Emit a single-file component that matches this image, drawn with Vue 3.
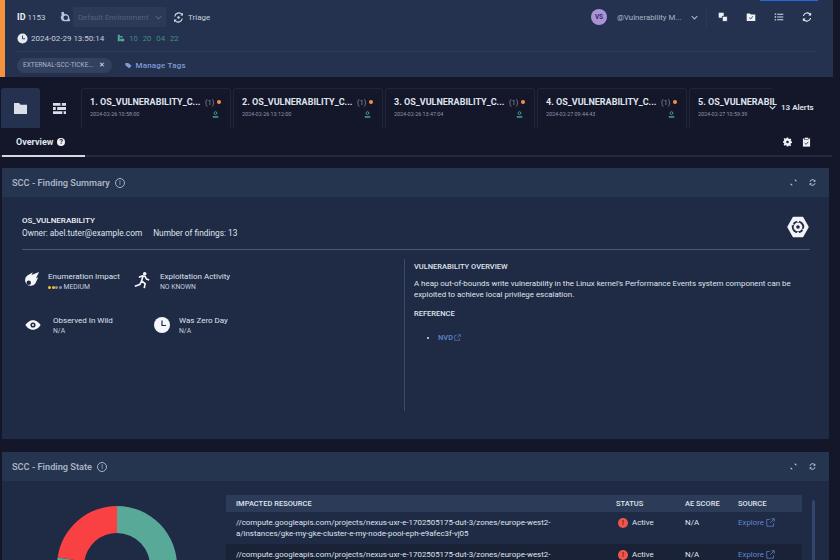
<template>
  <div class="page">
    <header class="top">
      <div class="accent"></div>
      <div class="top-main">
        <div class="blue-tab"></div>
        <div class="top-row">
          <div class="meta-left">
            <span class="id"><b>ID</b> 1153</span>
            <svg class="env-ico" viewBox="0 0 16 16"><path fill="#b9c4d6" d="M3 1.500 6 1l1.500 3.200A5 5 0 0 1 13.600 9l1.400 4.200-2.600.6H7a5 5 0 0 1-3.400-8.300z"/><circle cx="9" cy="9" r="3" fill="#25324f"/></svg>
            <div class="env-select">Default Environment
              <svg viewBox="0 0 10 6" class="chev"><path d="M1 1l4 4 4-4" fill="none" stroke="#53617c" stroke-width="1.500"/></svg>
            </div>
            <svg class="triage-ico" viewBox="0 0 16 16"><path d="M13 3.500A6 6 0 0 0 2.500 6.500M3 12.500A6 6 0 0 0 13.500 9.500" fill="none" stroke="#d5dbe6" stroke-width="1.600"/><path d="M14.500 1v4h-4zM1.500 15v-4h4z" fill="#d5dbe6"/><circle cx="8" cy="8" r="1.800" fill="#d5dbe6"/></svg>
            <span class="triage">Triage</span>
          </div>
          <div class="meta-right">
            <span class="avatar">VS</span>
            <span class="user">@Vulnerability M...</span>
            <svg viewBox="0 0 10 6" class="chev user-chev"><path d="M1 1l4 4 4-4" fill="none" stroke="#aab4c6" stroke-width="1.500"/></svg>
            <span class="vsep"></span>
            <div class="actions">
              <svg viewBox="0 0 14 14"><rect x="1" y="1" width="7" height="7" fill="#eef1f6"/><rect x="6" y="6" width="7" height="7" fill="#eef1f6" stroke="#25324f"/></svg>
              <svg viewBox="0 0 14 14"><path d="M1 2h4.500l1.500 1.500h6V12.500H1z" fill="#eef1f6"/><path d="M4.500 8l2 1.800L9.500 6" fill="none" stroke="#25324f" stroke-width="1.200"/></svg>
              <svg viewBox="0 0 14 14"><path d="M1 2h2v2H1zM1 6h2v2H1zM1 10h2v2H1zM4.500 2.300H13v1.400H4.500zM4.500 6.300H13v1.400H4.500zM4.500 10.300H13v1.400H4.500z" fill="#d5dbe6"/></svg>
              <svg viewBox="0 0 14 14"><path d="M11.500 3.500A5.300 5.300 0 0 0 2 5.500M2.500 10.500A5.300 5.300 0 0 0 12 8.500" fill="none" stroke="#eef1f6" stroke-width="1.600"/><path d="M12.800 .8v4h-4zM1.200 13.200v-4h4z" fill="#eef1f6"/></svg>
            </div>
          </div>
        </div>
        <div class="time-row">
          <svg class="clock" viewBox="0 0 12 12"><circle cx="6" cy="6" r="5.500" fill="#e6eaf1"/><path d="M6 2.800V6.300H8.800" fill="none" stroke="#25324f" stroke-width="1"/></svg>
          <span class="stamp">2024-02-29 13:50:14</span>
          <svg class="sla" viewBox="0 0 10 10"><path d="M1 1h2.500v8H1zM4 6h5v3H4zM4 2.500h3v2H4z" fill="#4fae95"/></svg>
          <span class="countdown">10<i>:</i>20<i>:</i>04<i>:</i>22</span>
        </div>
        <div class="divider"></div>
        <div class="tag-row">
          <span class="tag">EXTERNAL-SCC-TICKE... <em>✕</em></span>
          <span class="manage">
            <svg viewBox="0 0 10 10"><path d="M.5 1.500h4l5 4-3.500 3.500-5.500-4.500z" fill="#7f9bd8"/></svg>
            Manage Tags
          </span>
        </div>
      </div>
    </header>

    <nav class="tabs">
      <div class="icon-tab active">
        <svg viewBox="0 0 16 14"><path d="M1 1h5.500l1.500 2H15v10H1z" fill="#d9dfe9"/></svg>
      </div>
      <div class="icon-tab">
        <svg viewBox="0 0 16 14"><path d="M1 1h14v3H1zM1 5.500h14v3H1zM1 10h14v3H1z" fill="#d9dfe9"/><path d="M9 1h1.500v3H9zM4 5.500h1.500v3H4zM11 10h1.500v3H11z" fill="#14162a"/></svg>
      </div>
      <div class="alert-tab" v-for="t in alertTabs" :key="t.n">
        <div class="alert-title">
          <span class="alert-name">{{ t.n }}. OS_VULNERABILITY_C...</span>
          <span class="alert-count">(1)</span>
          <span class="dot"></span>
        </div>
        <div class="alert-sub">
          <span class="alert-date">{{ t.date }}</span>
          <svg viewBox="0 0 10 10" class="person"><circle cx="5" cy="3" r="2" fill="none" stroke="#4fae95" stroke-width="1.200"/><path d="M1 9.500V7.500h8v2z" fill="#4fae95"/></svg>
        </div>
      </div>
      <div class="alert-tab last">
        <div class="alert-title"><span class="alert-name clip">5. OS_VULNERABIL</span></div>
        <div class="alert-sub"><span class="alert-date">2024-02-27 10:59:39</span></div>
      </div>
      <div class="alerts-total">
        <svg viewBox="0 0 10 6" class="chev"><path d="M1 1l4 4 4-4" fill="none" stroke="#d5dbe6" stroke-width="1.500"/></svg>
        13 Alerts
      </div>
    </nav>

    <div class="subnav">
      <div class="overview">Overview <span class="help">?</span></div>
      <div class="subnav-icons">
        <svg viewBox="0 0 12 12"><path fill="#eef1f6" d="M5 0h2l.3 1.600 1.200.5 1.400-.9 1.300 1.400-.9 1.300.5 1.200 1.200.3v2l-1.500.3-.5 1.200.9 1.400-1.300 1.300-1.400-.9-1.200.5L7 12H5l-.3-1.400-1.200-.5-1.400.9L.8 9.700l.9-1.400-.5-1.200L0 6.900v-2l1.200-.3.5-1.200-.9-1.300 1.300-1.400 1.400.9 1.200-.5z"/><circle cx="6" cy="6" r="1.700" fill="#14162a"/></svg>
        <svg viewBox="0 0 12 14"><path d="M1 2h10v11.500H1z" fill="#eef1f6"/><rect x="3.500" y=".5" width="5" height="3" fill="#eef1f6" stroke="#14162a" stroke-width=".7"/><path d="M3.500 8.500l2 1.800 3-3.500" fill="none" stroke="#14162a" stroke-width="1.100"/></svg>
      </div>
    </div>

    <section class="panel summary">
      <div class="panel-head">
        <span class="panel-title">SCC - Finding Summary</span>
        <span class="info">i</span>
        <div class="panel-tools">
          <svg viewBox="0 0 10 10"><path d="M6 1h3v3zM1 9V6l3 3z" fill="#d5dbe6"/></svg>
          <svg viewBox="0 0 10 10"><path d="M8 2.500A3.600 3.600 0 0 0 1.500 4M2 7.500A3.600 3.600 0 0 0 8.500 6" fill="none" stroke="#d5dbe6" stroke-width="1.200"/><path d="M9 .8v3H6zM1 9.200v-3h3z" fill="#d5dbe6"/></svg>
        </div>
      </div>
      <div class="summary-body">
        <div class="finding-head">
          <div>
            <div class="finding-name">OS_VULNERABILITY</div>
            <div class="finding-owner">
              <span>Owner: abel.tuter@example.com</span>
              <span>Number of findings: 13</span>
            </div>
          </div>
          <svg class="hex" viewBox="0 0 24 24">
            <path d="M7 1.500h10L23 12l-6 10.500H7L1 12z" fill="#f2f4f8" stroke="#f2f4f8" stroke-linejoin="round" stroke-width="1.500"/>
            <circle cx="12" cy="12" r="5.800" fill="none" stroke="#1f2a44" stroke-width="2"/>
            <circle cx="12" cy="12" r="2" fill="#1f2a44"/>
            <path d="M12 2.500v4M12 17.500v4M3.500 7.500l3.500 2M17 14.500l3.500 2" stroke="#f2f4f8" stroke-width="2"/>
          </svg>
        </div>
        <div class="hr"></div>
        <div class="columns">
          <div class="stats">
            <div class="stat">
              <svg class="comet" viewBox="0 0 20 20"><path d="M19 1l-3.500 7L18 7l-3 6.500a6.300 6.300 0 1 1-9-8.500L12 1.500l-1.500 3z" fill="#f4f6fa"/><circle cx="7.500" cy="13" r="2.500" fill="#1f2a44"/></svg>
              <div>
                <div class="stat-name">Enumeration Impact</div>
                <div class="stat-val"><span class="pips"><i class="on"></i><i class="on"></i><i></i><i></i></span>MEDIUM</div>
              </div>
            </div>
            <div class="stat">
              <svg class="runner" viewBox="0 0 20 20"><circle cx="13" cy="3" r="2" fill="#f4f6fa"/><path d="M6.500 7l4-1.500 3 .5 1.500 3 3 1M11 6l-1.500 5 4 3-1 5M9.500 11.500 7.500 15 2 17" fill="none" stroke="#f4f6fa" stroke-width="1.800"/></svg>
              <div>
                <div class="stat-name">Exploitation Activity</div>
                <div class="stat-val">NO KNOWN</div>
              </div>
            </div>
            <div class="stat">
              <svg class="eye" viewBox="0 0 20 14"><path d="M10 1c4.500 0 8 3.500 9.500 6-1.500 2.500-5 6-9.500 6S2 9.500.5 7C2 4.500 5.500 1 10 1z" fill="#f4f6fa"/><circle cx="10" cy="7" r="3.200" fill="#1f2a44"/><circle cx="10" cy="7" r="1.300" fill="#f4f6fa"/></svg>
              <div>
                <div class="stat-name">Observed In Wild</div>
                <div class="stat-val">N/A</div>
              </div>
            </div>
            <div class="stat">
              <svg class="clock-big" viewBox="0 0 16 16"><circle cx="8" cy="8" r="8" fill="#f4f6fa"/><path d="M8 3.500V8.500H12" fill="none" stroke="#1f2a44" stroke-width="1.200"/></svg>
              <div>
                <div class="stat-name">Was Zero Day</div>
                <div class="stat-val">N/A</div>
              </div>
            </div>
          </div>
          <div class="overview-col">
            <div class="col-head">VULNERABILITY OVERVIEW</div>
            <p class="col-text">A heap out-of-bounds write vulnerability in the Linux kernel's Performance Events system component can be exploited to achieve local privilege escalation.</p>
            <div class="col-head ref">REFERENCE</div>
            <ul class="refs">
              <li>NVD<svg viewBox="0 0 10 10"><path d="M8 6v3H1V2h3M5.500 1H9v3.500M9 1 4.500 5.500" fill="none" stroke="#5f86cf" stroke-width=".9"/></svg></li>
            </ul>
          </div>
        </div>
      </div>
    </section>

    <section class="panel state">
      <div class="panel-head">
        <span class="panel-title">SCC - Finding State</span>
        <span class="info">i</span>
        <div class="panel-tools">
          <svg viewBox="0 0 10 10"><path d="M6 1h3v3zM1 9V6l3 3z" fill="#d5dbe6"/></svg>
          <svg viewBox="0 0 10 10"><path d="M8 2.500A3.600 3.600 0 0 0 1.500 4M2 7.500A3.600 3.600 0 0 0 8.500 6" fill="none" stroke="#d5dbe6" stroke-width="1.200"/><path d="M9 .8v3H6zM1 9.200v-3h3z" fill="#d5dbe6"/></svg>
        </div>
      </div>
      <div class="state-body">
        <div class="donut-wrap">
          <svg class="donut" viewBox="0 0 120 120">
            <path d="M60 0a60 60 0 1 1-59.400 51.600L27.300 55.400A33 33 0 1 0 60 27z" fill="#58a997"/>
            <path d="M60 0v27a33 33 0 0 0-32.700 28.400L.6 51.600A60 60 0 0 1 60 0z" fill="#f94144"/>
          </svg>
        </div>
        <div class="table-wrap">
          <div class="t-row t-head">
            <span class="c-res">IMPACTED RESOURCE</span>
            <span class="c-status">STATUS</span>
            <span class="c-score">AE SCORE</span>
            <span class="c-src">SOURCE</span>
          </div>
          <div class="t-row" v-for="(r, i) in rows" :key="i" :class="{ alt: i % 2 }">
            <span class="c-res">{{ r }}</span>
            <span class="c-status"><b class="bang">!</b>Active</span>
            <span class="c-score">N/A</span>
            <span class="c-src link">Explore<svg viewBox="0 0 12 12"><path d="M10 7v4H1V2h4M7 1h4v4M11 1 5.500 6.500" fill="none" stroke="#5f86cf" stroke-width="1"/></svg></span>
          </div>
        </div>
        <div class="scrollbar"></div>
      </div>
    </section>
  </div>
</template>

<script setup>
const alertTabs = [
  { n: 1, date: '2024-02-26 10:58:00' },
  { n: 2, date: '2024-02-26 13:12:00' },
  { n: 3, date: '2024-02-26 13:47:04' },
  { n: 4, date: '2024-02-27 09:44:43' }
];

const path = '//compute.googleapis.com/projects/nexus-uxr-e-1702505175-dut-3/zones/europe-west2-a/instances/gke-my-gke-cluster-e-my-node-pool-eph-e9afec3f-vj05';
const rows = [path, path];
</script>

<style>
html, body {
  margin: 0;
  background: #14162a;
  overflow: hidden;
}
</style>

<style scoped>
.page {
  width: 840px;
  height: 560px;
  overflow: hidden;
  background: #14162a;
  font-family: Roboto, "Noto Sans", sans-serif;
  color: #e6eaf1;
  font-size: 8px;
}
svg { display: block; flex: none; }

.top {
  display: flex;
  width: 833px;
  height: 77px;
  background: #25324f;
}
.accent { width: 5px; background: #f5923e; }
.top-main { flex: 1; position: relative; padding: 0 16px 0 12px; min-width: 0; }
.blue-tab {
  position: absolute;
  top: -1px;
  right: 15px;
  width: 58px;
  height: 2px;
  background: #2469e0;
}
.top-row {
  display: flex;
  justify-content: space-between;
  align-items: center;
  height: 24px;
  padding-top: 5px;
}
.meta-left, .meta-right { display: flex; align-items: center; }
.id { font-size: 8px; color: #c8cfdc; width: 42px; }
.id b { color: #eef1f6; font-size: 9px; }
.env-ico { width: 12px; height: 12px; margin-right: 2px; }
.env-select {
  display: flex;
  align-items: center;
  justify-content: space-between;
  width: 93px;
  height: 20px;
  padding: 0 4px 0 5px;
  box-sizing: border-box;
  background: #2c3a58;
  color: #53617c;
  font-size: 7.800px;
  white-space: nowrap;
}
.chev { width: 7px; height: 5px; }
.triage-ico { width: 11px; height: 11px; margin: 0 4px 0 7px; }
.triage { color: #c8cfdc; font-size: 8px; }
.avatar {
  width: 16px;
  height: 16px;
  border-radius: 50%;
  background: #a992d6;
  color: #33305a;
  font-size: 6.500px;
  font-weight: 700;
  display: flex;
  align-items: center;
  justify-content: center;
  margin-right: 10px;
}
.user { color: #aab4c6; font-size: 7.800px; width: 70px; white-space: nowrap; }
.user-chev { margin: 0 8px 0 4px; }
.vsep { width: 1px; height: 22px; background: #2c3a58; margin-right: 11px; }
.actions { display: flex; gap: 18px; align-items: center; margin-right: 5px; }
.actions svg { width: 10px; height: 10px; }

.time-row { display: flex; align-items: center; height: 18px; }
.clock { width: 11px; height: 11px; margin-right: 3px; }
.stamp { font-size: 8px; color: #c8cfdc; width: 86px; }
.sla { width: 8px; height: 8px; margin-right: 4px; }
.countdown { color: #3d8f7f; font-size: 7.800px; }
.countdown i { font-style: normal; margin: 0 1.500px; color: #3b4a68; }
.divider { height: 1px; background: #2f3e5c; margin: 4px 0 0; }
.tag-row { display: flex; align-items: center; height: 26px; }
.tag {
  display: flex;
  align-items: center;
  gap: 5px;
  height: 15px;
  padding: 0 7px 0 6px;
  border-radius: 8px;
  background: #32415f;
  color: #aab4c6;
  font-size: 6.500px;
  white-space: nowrap;
}
.tag em { font-style: normal; color: #dfe4ec; font-size: 7px; }
.manage {
  display: flex;
  align-items: center;
  gap: 4px;
  margin-left: 13px;
  color: #7f9bd8;
  font-size: 8px;
  font-weight: 500;
  letter-spacing: .2px;
}
.manage svg { width: 7px; height: 7px; }

.tabs {
  display: flex;
  height: 40px;
  margin-top: 11px;
  padding-left: 1px;
  align-items: stretch;
  position: relative;
}
.icon-tab {
  width: 39px;
  display: flex;
  align-items: center;
  justify-content: center;
  border-radius: 3px 3px 0 0;
}
.icon-tab svg { width: 15px; height: 13px; }
.icon-tab.active { background: #25324f; }
.icon-tab:not(.active) { width: 38px; }
.alert-tab {
  width: 150px;
  margin-left: 2px;
  padding: 6px 9px 0 8px;
  box-sizing: border-box;
  border: 1px solid #1f2539;
  border-bottom: 0;
  border-radius: 3px 3px 0 0;
  flex: none;
}
.icon-tab + .alert-tab { margin-left: 3px; }
.alert-tab.last { width: 85px; border-right: 0; }
.alert-title { display: flex; align-items: center; height: 14px; white-space: nowrap; }
.alert-name { color: #dfe4ec; font-size: 9px; font-weight: 700; width: 115px; flex: none; }
.alert-name.clip { width: auto; }
.alert-count { color: #8a93a6; font-size: 7.500px; flex: none; }
.dot { width: 4px; height: 4px; border-radius: 50%; background: #f5923e; margin-left: 3px; flex: none; }
.alert-sub { display: flex; justify-content: space-between; align-items: center; height: 10px; }
.alert-date { color: #9099ab; font-size: 5.400px; white-space: nowrap; }
.person { width: 7px; height: 7px; margin-right: 2px; }
.alerts-total {
  position: absolute;
  left: 769px;
  top: 15px;
  display: flex;
  align-items: center;
  gap: 5px;
  font-size: 8px;
  font-weight: 600;
  color: #dfe4ec;
}

.subnav {
  display: flex;
  justify-content: space-between;
  align-items: flex-start;
  width: 832px;
  height: 29px;
  border-bottom: 2px solid #25293d;
  box-sizing: border-box;
  padding-left: 16px;
  padding-right: 21px;
  position: relative;
}
.overview {
  display: flex;
  align-items: center;
  gap: 4px;
  font-size: 9px;
  font-weight: 700;
  color: #dfe4ec;
  height: 27px;
}
.overview::after {
  content: "";
  position: absolute;
  left: 2px;
  bottom: -2px;
  width: 83px;
  height: 2px;
  background: #d5d8de;
}
.help {
  width: 8px;
  height: 8px;
  border-radius: 50%;
  background: #eef1f6;
  color: #14162a;
  font-size: 7px;
  line-height: 8px;
  text-align: center;
}
.subnav-icons { display: flex; gap: 10px; align-items: center; height: 27px; }
.subnav-icons svg { width: 9px; height: 10px; }

.panel {
  width: 827px;
  margin: 11px 0 0 2px;
  background: #1f2a44;
}
.panel-head {
  display: flex;
  align-items: center;
  height: 29px;
  padding: 0 13px 0 10px;
  background: #25344f;
}
.panel-title { font-size: 9.200px; font-weight: 600; color: #a9b3c4; }
.info {
  width: 8px;
  height: 8px;
  border: 1px solid #a9b3c4;
  border-radius: 50%;
  margin-left: 5px;
  color: #a9b3c4;
  font-size: 7px;
  line-height: 8px;
  text-align: center;
}
.panel-tools { margin-left: auto; display: flex; gap: 12px; align-items: center; }
.panel-tools svg { width: 7px; height: 7px; }

.summary { height: 271px; }
.summary-body { padding: 17px 19px 0 20px; }
.finding-head { display: flex; justify-content: space-between; align-items: center; }
.hex { width: 22px; height: 22px; margin-right: 1px; }
.finding-name { font-size: 8px; font-weight: 500; color: #eef1f6; line-height: 13px; }
.finding-owner { display: flex; gap: 11px; font-size: 8.300px; color: #dfe4ec; line-height: 13px; }
.hr { height: 1px; background: #4a5876; margin-top: 9px; }
.columns { display: flex; height: 152px; margin-top: 9px; }
.stats {
  width: 382px;
  display: grid;
  grid-template-columns: 111px 1fr;
  grid-auto-rows: 44px;
  padding-top: 12px;
}
.stat { display: flex; align-items: flex-start; }
.stat-name { font-size: 8px; color: #dfe4ec; line-height: 11px; }
.stat-val { font-size: 6.800px; color: #c8cfdc; line-height: 10px; display: flex; align-items: center; }
.comet { width: 18px; height: 18px; margin: 0 8px 0 0; }
.runner { width: 18px; height: 18px; margin: 0 9px 0 0; }
.eye { width: 16px; height: 12px; margin: 4px 12px 0 3px; }
.clock-big { width: 16px; height: 16px; margin: 2px 9px 0 21px; }
.pips { display: inline-flex; gap: .5px; margin-right: 2px; }
.pips i { width: 3px; height: 3px; border-radius: 50%; background: #8a93a6; }
.pips i.on { background: #f1c232; }
.overview-col {
  flex: 1;
  border-left: 1px solid #3e4b68;
  padding-left: 9px;
  min-width: 0;
}
.col-head { font-size: 7.500px; font-weight: 500; color: #dfe4ec; line-height: 10px; margin-top: 3px; }
.col-text { font-size: 7.900px; color: #dfe4ec; line-height: 11px; margin: 6px 0 0; }
.col-head.ref { margin-top: 9px; }
.refs { margin: 13px 0 0; padding-left: 24px; font-size: 7.500px; color: #5f86cf; font-weight: 500; }
.refs li { line-height: 11px; }
.refs li::marker { color: #dfe4ec; }
.refs li svg { display: inline-block; width: 7px; height: 7px; margin-left: 1px; vertical-align: -1px; }

.state { margin-top: 13px; height: 200px; }
.state-body { display: flex; padding-top: 14px; position: relative; }
.donut-wrap { width: 224px; padding: 11px 0 0 55px; box-sizing: border-box; }
.donut { width: 120px; height: 120px; }
.table-wrap { width: 576px; font-size: 7.900px; color: #dfe4ec; }
.t-row {
  display: flex;
  align-items: flex-start;
  padding: 5px 0 4px 10px;
  height: 32px;
  box-sizing: border-box;
  line-height: 11px;
}
.t-row.alt { background: #1a2238; }
.t-head {
  height: 17px;
  padding: 0 0 0 10px;
  align-items: center;
  background: #2c3b58;
  font-size: 7.500px;
  font-weight: 500;
}
.c-res { width: 380px; padding-right: 50px; box-sizing: border-box; }
.c-status { width: 69px; display: flex; align-items: center; }
.c-score { width: 53px; }
.c-src { flex: 1; display: flex; align-items: center; gap: 2px; }
.link { color: #5f86cf; }
.link svg { width: 9px; height: 9px; }
.bang {
  width: 10px;
  height: 10px;
  border-radius: 50%;
  background: #f1554c;
  color: #7c1d18;
  font-size: 7px;
  line-height: 10px;
  text-align: center;
  margin: 0 4px 0 2px;
}
.scrollbar {
  position: absolute;
  left: 810px;
  top: 19px;
  width: 3px;
  height: 120px;
  background: #33456c;
  border-radius: 2px;
}
</style>
